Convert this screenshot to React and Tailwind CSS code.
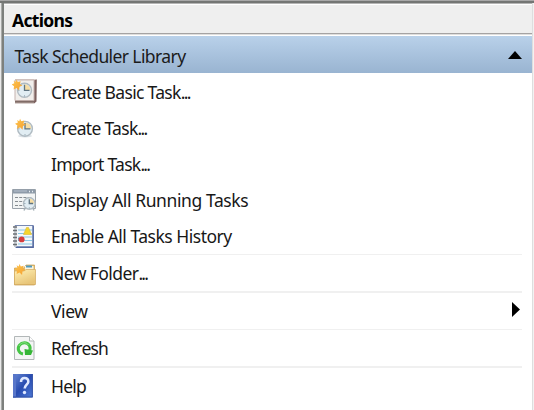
function Star() {
  return <path d="M6 0 7.5 3 11 2 10 5.5 13 7 9.5 8.5 9 13 6 10 2.5 12 3 8 0 6 3.5 4.5 2.5 1.5 5 3Z" fill="url(#spark)" />;
}

function Clock({ x, y, r }) {
  return (
    <g transform={`translate(${x} ${y})`}>
      <circle r={r} fill="#e1edf3" stroke="#b0bbc2" strokeWidth="1.4" />
      <path d={`M0 0V${-r + 1}A${r - 1} ${r - 1} 0 0 1 ${r - 1} 0Z`} fill="#f7dda3" />
      <path d={`M0 ${-r + 1.5}V0H${r - 2}`} fill="none" stroke="#5f7481" strokeWidth="1.3" />
      <path d={`M0 ${r - 1.8}v.8M${-r + 1} 0h.8`} stroke="#6f8796" />
    </g>
  );
}

const icons = {
  basic: (
    <>
      <path d="M3 0.5H25L24 22.5 22 24.5H3Z" fill="#b3a19d" />
      <path d="M22 1.5 24.5 .5V22.5L22 24.5Z" fill="#7c615f" />
      <path d="M3 1H22V21.5H3Z" fill="#f1eeeb" stroke="#c5b3af" />
      <path d="M3 22.7H22" stroke="#806c67" strokeWidth="1.6" />
      <Clock x={12.5} y={11.3} r={7} />
      <g transform="translate(-.5 .5) scale(.84)"><Star /></g>
    </>
  ),
  task: (
    <>
      <ellipse cx="13" cy="21" rx="7" ry="1.5" fill="#dce2e7" />
      <Clock x={13} y={13.8} r={7.4} />
      <g transform="translate(3 3.8) scale(.84)"><Star /></g>
    </>
  ),
  running: (
    <>
      <path d="M0.5 2.5H23.5V21.5H0.5Z" fill="#f2f4f4" stroke="#9ba3aa" />
      <path d="M1 2.5H23V6.5H1Z" fill="#8e9ba9" />
      <path d="M2 4H15" stroke="#b7c1ce" />
      <path d="M17 4.5h1M20 4.5h1" stroke="#e9eef3" strokeWidth="1.5" />
      <path d="M3 10.5H20M3 14.5H15M3 18.5H12" stroke="#858b90" strokeWidth="1.2" strokeDasharray="3 1.2" />
      <Clock x={17.3} y={16.5} r={5.8} />
      <path d="m13 21.5-1 2m9-2 1 2" stroke="#a5b1b7" strokeWidth="1.5" />
    </>
  ),
  history: (
    <g transform="translate(0 1)">
      <path d="M3 1.5H21V23H3Z" fill="#f4f8fb" stroke="#7889b2" />
      <path d="M21.2 1.5V23.2H4" fill="none" stroke="#5368a0" strokeWidth="1.4" />
      <path d="M6 6H20M6 9.5H20M6 13H20M6 16.5H20M6 20H20" stroke="#87c5e4" strokeWidth="1.2" />
      <path d="M3.3 3V23" stroke="#c6cbd0" strokeWidth="2.5" />
      <path d="M1 3H5M1 6.5H5M1 10H5M1 13.5H5M1 17H5M1 20.5H5" stroke="#6c7074" strokeWidth="1.3" />
      <path d="M14.5 3.5h2l3 7h-8Z" fill="#f6d52d" stroke="#d9b934" strokeWidth=".6" />
      <path d="M6 14.3h5M6 15.9h5" stroke="#59748c" />
      <circle cx="9.7" cy="15.4" r="2.9" fill="#d63c3b" />
    </g>
  ),
  folder: (
    <g transform="translate(0 3)">
      <path d="M2.5 5H12L14 2H22.5V22H2.5Z" fill="#e4bd69" stroke="#c99e50" strokeWidth=".7" />
      <path d="M13 3H21.5V7H13Z" fill="#f9f4df" />
      <path d="M14 3.5H20" stroke="#509bc2" strokeWidth="2" />
      <path d="M2.5 8H12L14 6.5H23.5V21.5H2.5Z" fill="url(#folder)" stroke="#d2a95e" strokeWidth=".7" />
      <g transform="translate(2.5 1) scale(.84)"><Star /></g>
    </g>
  ),
  refresh: (
    <>
      <path d="M2.5 1.5H17.5L22 6V24.5H2.5Z" fill="#f4f5f5" stroke="#b2b7b8" />
      <path d="M17.5 1.5V6H22" fill="#fff" stroke="#b2b7b8" />
      <path d="M11 19C6.5 18 5 13.5 7.5 10.2 10 7 15 7 17.3 10.3 18.6 12.2 18.3 14 17.5 16" fill="none" stroke="#45c545" strokeWidth="3" />
      <path d="M12.5 14 21 15.5 19 20H13Z" fill="#35b536" />
      <path d="M7 11c2-4 7-4.5 9.5-1" fill="none" stroke="#8adf83" />
    </>
  ),
  help: (
    <>
      <path d="M1 1H20.8V24.5H1Z" fill="url(#help)" />
      <path d="M1 1H4V24.5H1Z" fill="#5876c9" />
      <path d="M1 24H20.5M20.3 1V24" stroke="#3452a4" />
      <path d="M9 9C9 6 10.5 5 12.5 5 15 5 16.5 6.5 16.3 8.8 16 11.5 12.7 12 12.7 15.5" fill="none" stroke="#dfe8ff" strokeWidth="2.6" />
      <circle cx="12.5" cy="19.5" r="1.7" fill="#dfe8ff" />
    </>
  ),
};

function Row({ icon, label, tracking = "", more = false, arrow = false }) {
  return (
    <div className="flex h-9 shrink-0 items-center">
      <div className="ml-2 flex w-[39px] shrink-0">
        {icon && <svg className="size-[26px]" viewBox="0 0 26 26">{icons[icon]}</svg>}
      </div>
      <span className={`whitespace-nowrap leading-6 ${tracking}`}>
        {label}
        {more && <span className="tracking-[-1.7px]">...</span>}
      </span>
      {arrow && <svg className="mr-[12px] mb-[3px] ml-auto h-[15px] w-2" viewBox="0 0 8 15"><path d="M0 0 8 7.5 0 15Z" /></svg>}
    </div>
  );
}

function Divider({ size = "h-px" }) {
  return <div className={`ml-2 mr-[10px] shrink-0 bg-[#f0f0f0] ${size}`} />;
}

export default function App() {
  return (
    <div className="flex h-[410px] w-[534px] flex-col overflow-hidden bg-white font-['Noto_Sans',sans-serif] text-[17.5px] text-[#181818]">
      <svg className="absolute size-0">
        <defs>
          <linearGradient id="spark" x2="1" y2="1"><stop stopColor="#ffc54b" /><stop offset="1" stopColor="#f3a033" /></linearGradient>
          <linearGradient id="folder" x2=".5" y2="1"><stop stopColor="#fff0b4" /><stop offset="1" stopColor="#e8c578" /></linearGradient>
          <linearGradient id="help" x2="1" y2="1"><stop stopColor="#6687d3" /><stop offset=".5" stopColor="#294cb0" /><stop offset="1" stopColor="#4e7bd7" /></linearGradient>
        </defs>
      </svg>
      <div className="h-px shrink-0 bg-[#a8a8a8]" />
      <div className="h-[2px] shrink-0 bg-[#747674]" />
      <div className="flex min-h-0 flex-1">
        <div className="w-px bg-[#e9e9e9]" />
        <div className="w-px bg-[#a9aba9]" />
        <div className="w-[2px] bg-[#7d807d]" />
        <div className="flex min-w-0 flex-1 flex-col">
          <div className="h-px shrink-0 bg-[#b4b4b4]" />
          <div className="h-px shrink-0 bg-white" />
          <div className="flex h-7 shrink-0 items-center bg-[#efefef] pl-2 pt-[2px] font-bold tracking-[-0.66px] text-black">
            Actions
          </div>
          <div className="h-px shrink-0 bg-[#a5a3a3]" />
          <div className="h-px shrink-0 bg-[#dedede]" />
          <div className="h-px shrink-0 bg-white" />
          <div className="flex h-[37px] shrink-0 items-center bg-linear-to-b from-[#b9d1ea] to-[#99b4d1] pl-[10.5px] pr-[10px] text-[#1b1b1b]">
            <span className="pt-[3px] leading-6 tracking-[-0.6px]">Task Scheduler Library</span>
            <svg className="ml-auto h-2 w-[14px]" viewBox="0 0 14 8"><path d="M7 0 14 8H0Z" fill="#000" /></svg>
          </div>
          <div className="flex flex-1 flex-col pt-px">
            <Row icon="basic" label="Create Basic Task" tracking="tracking-[-0.68px]" more />
            <Row icon="task" label="Create Task" tracking="tracking-[-0.7px]" more />
            <Row label="Import Task" tracking="tracking-[-0.75px]" more />
            <Row icon="running" label="Display All Running Tasks" tracking="tracking-[-0.4px]" />
            <Row icon="history" label="Enable All Tasks History" tracking="tracking-[-0.49px]" />
            <Divider />
            <Row icon="folder" label="New Folder" tracking="tracking-[-0.58px]" more />
            <Divider size="h-[2px]" />
            <Row label="View" tracking="tracking-[-0.42px]" arrow />
            <Divider />
            <Row icon="refresh" label="Refresh" tracking="tracking-[-0.8px]" />
            <Divider size="h-[2px]" />
            <Row icon="help" label="Help" tracking="tracking-[-0.8px]" />
          </div>
        </div>
        <div className="w-px bg-[#dedede]" />
        <div className="w-px bg-[#f2f2f2]" />
      </div>
    </div>
  );
}
